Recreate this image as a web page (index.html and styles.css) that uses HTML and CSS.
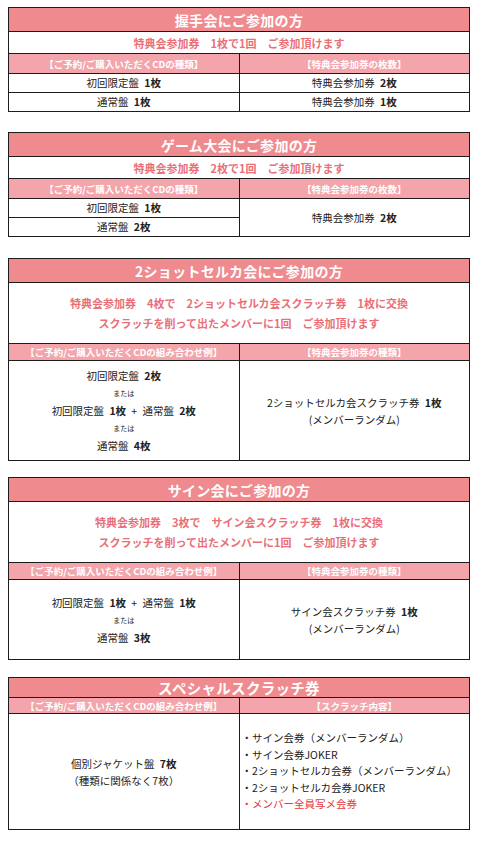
FILE: index.html
```html
<!DOCTYPE html>
<html lang="ja">
<head>
<meta charset="utf-8">
<link rel="stylesheet" href="styles.css">
</head>
<body>
<div class="page">

<table class="tbl t1">
  <tr><td colspan="2" class="title">握手会にご参加の方</td></tr>
  <tr><td colspan="2" class="sub">特典会参加券&emsp;1枚で1回&emsp;ご参加頂けます</td></tr>
  <tr class="hrow"><td class="head">【ご予約/ご購入いただくCDの種類】</td><td class="head">【特典会参加券の枚数】</td></tr>
  <tr class="brow"><td>初回限定盤&ensp;<b>1枚</b></td><td>特典会参加券&ensp;<b>2枚</b></td></tr>
  <tr class="brow"><td>通常盤&ensp;<b>1枚</b></td><td>特典会参加券&ensp;<b>1枚</b></td></tr>
</table>

<table class="tbl t2">
  <tr><td colspan="2" class="title">ゲーム大会にご参加の方</td></tr>
  <tr><td colspan="2" class="sub">特典会参加券&emsp;2枚で1回&emsp;ご参加頂けます</td></tr>
  <tr class="hrow"><td class="head">【ご予約/ご購入いただくCDの種類】</td><td class="head">【特典会参加券の枚数】</td></tr>
  <tr class="brow"><td>初回限定盤&ensp;<b>1枚</b></td><td rowspan="2">特典会参加券&ensp;<b>2枚</b></td></tr>
  <tr class="brow"><td>通常盤&ensp;<b>2枚</b></td></tr>
</table>

<table class="tbl t3">
  <tr><td colspan="2" class="title">2ショットセルカ会にご参加の方</td></tr>
  <tr><td colspan="2" class="sub sub2">特典会参加券&emsp;4枚で&emsp;2ショットセルカ会スクラッチ券&emsp;1枚に交換<br>スクラッチを削って出たメンバーに1回&emsp;ご参加頂けます</td></tr>
  <tr class="hrow2"><td class="head">【ご予約/ご購入いただくCDの組み合わせ例】</td><td class="head">【特典会参加券の種類】</td></tr>
  <tr class="bigrow">
    <td><div class="ln">初回限定盤&ensp;<b>2枚</b></div><div class="or">または</div><div class="ln">初回限定盤&ensp;<b>1枚</b>&ensp;+&ensp;通常盤&ensp;<b>2枚</b></div><div class="or">または</div><div class="ln">通常盤&ensp;<b>4枚</b></div></td>
    <td><div class="ln">2ショットセルカ会スクラッチ券&ensp;<b>1枚</b></div><div class="ln">(メンバーランダム)</div></td>
  </tr>
</table>

<table class="tbl t4">
  <tr><td colspan="2" class="title">サイン会にご参加の方</td></tr>
  <tr><td colspan="2" class="sub sub2">特典会参加券&emsp;3枚で&emsp;サイン会スクラッチ券&emsp;1枚に交換<br>スクラッチを削って出たメンバーに1回&emsp;ご参加頂けます</td></tr>
  <tr class="hrow2"><td class="head">【ご予約/ご購入いただくCDの組み合わせ例】</td><td class="head">【特典会参加券の種類】</td></tr>
  <tr class="bigrow4">
    <td><div class="ln">初回限定盤&ensp;<b>1枚</b>&ensp;+&ensp;通常盤&ensp;<b>1枚</b></div><div class="or">または</div><div class="ln">通常盤&ensp;<b>3枚</b></div></td>
    <td><div class="ln">サイン会スクラッチ券&ensp;<b>1枚</b></div><div class="ln">(メンバーランダム)</div></td>
  </tr>
</table>

<table class="tbl t5">
  <tr><td colspan="2" class="title title5">スペシャルスクラッチ券</td></tr>
  <tr class="hrow5"><td class="head">【ご予約/ご購入いただくCDの組み合わせ例】</td><td class="head">【スクラッチ内容】</td></tr>
  <tr class="bigrow5">
    <td><div class="ln">個別ジャケット盤&ensp;<b>7枚</b></div><div class="ln">（種類に関係なく7枚）</div></td>
    <td class="list">
      <div class="li">・サイン会券（メンバーランダム）</div>
      <div class="li">・サイン会券JOKER</div>
      <div class="li">・2ショットセルカ会券（メンバーランダム）</div>
      <div class="li">・2ショットセルカ会券JOKER</div>
      <div class="li red">・メンバー全員写メ会券</div>
    </td>
  </tr>
</table>

</div>
</body>
</html>
```

FILE: styles.css
```css
html, body {
  margin: 0;
  padding: 0;
  background: #ffffff;
}
body {
  font-family: "Noto Sans CJK JP", "Noto Sans", sans-serif;
  color: #222;
}
.page {
  display: flex;
  flex-direction: column;
  padding: 7px 0 0 8px;
}
.tbl {
  width: 462px;
  border-collapse: collapse;
  table-layout: fixed;
}
.tbl td {
  border: 1.5px solid #1c1c1c;
  text-align: center;
  vertical-align: middle;
  padding: 0;
  font-size: 10.5px;
  line-height: 14px;
  width: 50%;
}
.tbl b {
  font-weight: 700;
}
.t1 { margin-bottom: 20px; }
.t2 { margin-bottom: 21px; }
.t3 { margin-bottom: 16px; }
.t4 { margin-bottom: 17px; }

.title {
  background: #ef8a8f;
  color: #ffffff;
  font-weight: 700;
  font-size: 14px !important;
  height: 23px;
  letter-spacing: 0.3px;
}
.title5 {
  height: 19px;
  font-size: 14.5px !important;
}
.sub {
  color: #ea6f78;
  font-weight: 700;
  font-size: 11px !important;
  height: 21px;
}
.sub2 {
  height: 60px;
  line-height: 20px !important;
}
.head {
  background: #f3a5ab;
  color: #ffffff;
  font-weight: 700;
  font-size: 9.5px !important;
}
.hrow td { height: 19px; }
.hrow2 td { height: 16px; }
.hrow5 td { height: 15px; }
.brow td { height: 18px; }
.bigrow td { height: 99px; }
.bigrow4 td { height: 79px; }
.bigrow5 td { height: 115px; }
.ln {
  line-height: 17px;
}
.or {
  font-size: 7px;
  line-height: 18px;
}
.list {
  text-align: left !important;
  padding-left: 2px !important;
}
.li {
  line-height: 16.5px;
}
.red {
  color: #e8383d;
}
```
